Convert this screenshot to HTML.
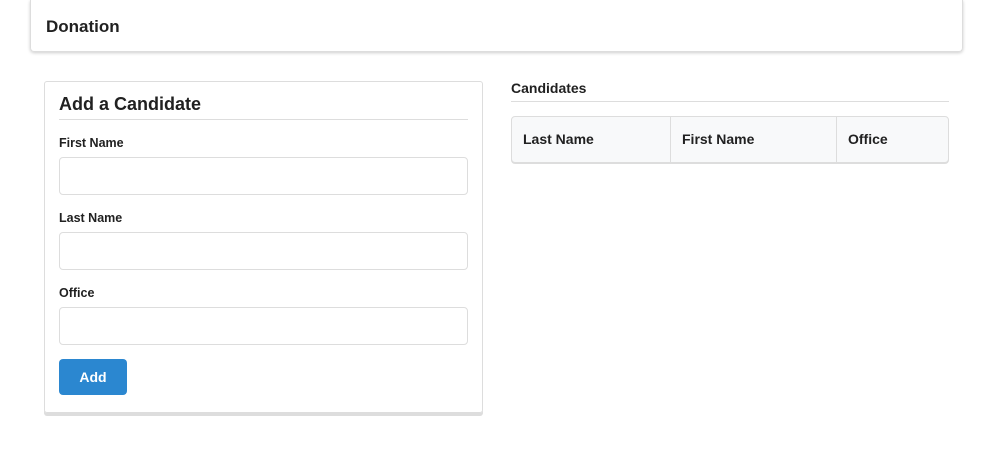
<!DOCTYPE html>
<html><head><meta charset="utf-8"><style>
*{box-sizing:border-box}
body{margin:0;width:989px;height:456px;background:#fff;font-family:"Liberation Sans",sans-serif;color:#212121;position:relative;overflow:hidden}
.abs{position:absolute}
.top{left:30px;top:0;width:933px;height:52px;border:1px solid #ddd;border-top:none;border-radius:0 0 4px 4px;box-shadow:0 1px 3px rgba(0,0,0,.2)}
.top span{position:absolute;left:15px;top:17px;font-size:17px;font-weight:bold}
.card{left:44px;top:81px;width:439px;height:332px;border:1px solid #ddd;border-radius:3px;box-shadow:0 3px 0 #ddd}
.h{position:absolute;left:14px;font-weight:bold}
.inp{position:absolute;left:14px;width:409px;height:38px;border:1px solid #ddd;border-radius:4px}
.lbl{font-size:12.5px}
.btn{position:absolute;left:14px;top:277px;width:68px;height:36px;background:#2b87d0;border-radius:4px;color:#fff;font-weight:bold;font-size:14px;text-align:center;line-height:36px}
.tbl{left:511px;top:116px;width:438px;height:47px;border:1px solid #ddd;border-radius:4px;background:#f8f9fa;box-shadow:0 1px 0 #ddd;font-weight:bold;font-size:14px}
.tbl div{position:absolute;top:0;height:45px;line-height:45px;padding-left:11px;border-right:1px solid #ddd}
</style></head><body>
<div class="abs top"><span>Donation</span></div>
<div class="abs card">
 <div class="h" style="top:12px;font-size:18px">Add a Candidate</div>
 <div class="abs" style="left:14px;top:37px;width:409px;border-top:1px solid #ddd"></div>
 <div class="h lbl" style="top:54px">First Name</div>
 <div class="inp" style="top:75px"></div>
 <div class="h lbl" style="top:129px">Last Name</div>
 <div class="inp" style="top:150px"></div>
 <div class="h lbl" style="top:204px">Office</div>
 <div class="inp" style="top:225px"></div>
 <div class="btn">Add</div>
</div>
<div class="abs" style="left:511px;top:80px;font-weight:bold;font-size:14px">Candidates</div>
<div class="abs" style="left:511px;top:101px;width:438px;border-top:1px solid #ddd"></div>
<div class="abs tbl">
 <div style="left:0;width:159px">Last Name</div>
 <div style="left:159px;width:166px">First Name</div>
 <div style="left:325px;width:111px;border-right:none">Office</div>
</div>
</body></html>
